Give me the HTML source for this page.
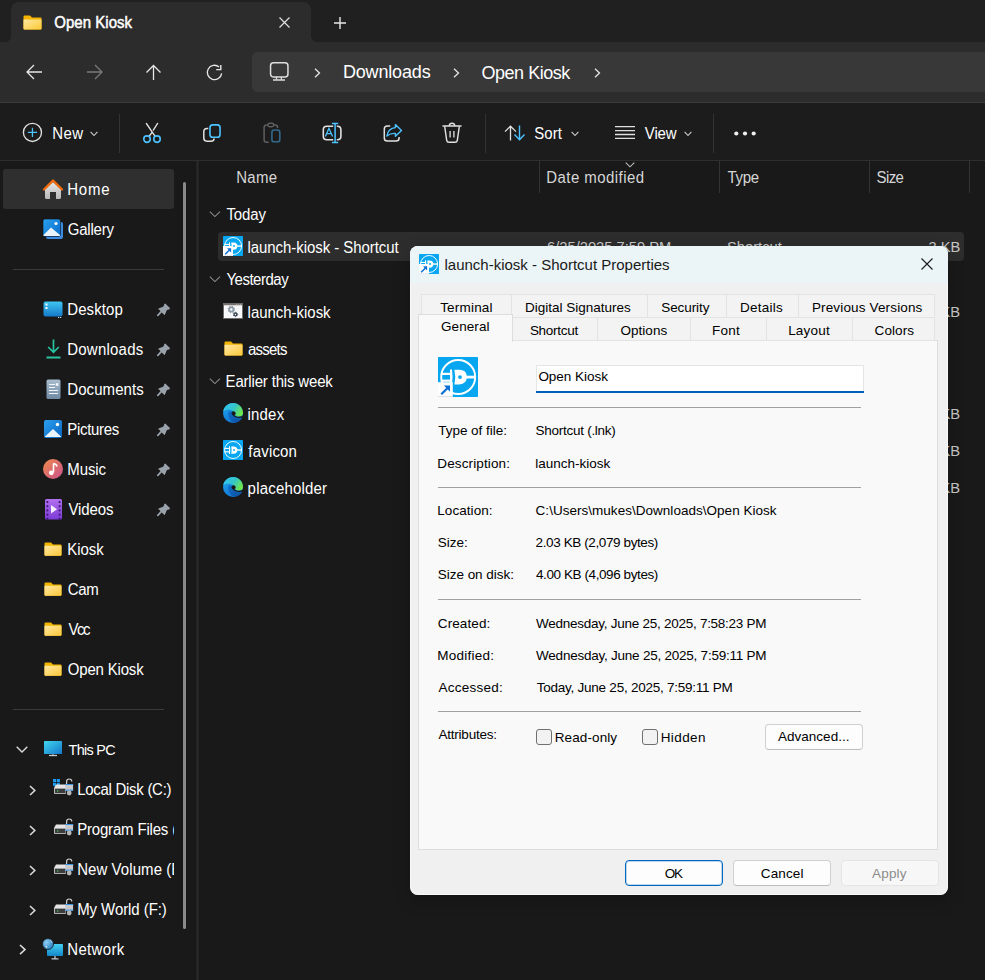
<!DOCTYPE html>
<html><head><meta charset="utf-8"><style>
html,body{margin:0;padding:0}
body{width:985px;height:980px;position:relative;overflow:hidden;background:#191919;font-family:"Liberation Sans", sans-serif}
.t{position:absolute;white-space:pre;line-height:1;font-family:"Liberation Sans", sans-serif}
svg{overflow:visible}
</style></head><body>
<div style="position:absolute;left:0px;top:0px;width:985px;height:42px;background:#202020"></div>
<div style="position:absolute;left:11px;top:2px;width:300px;height:44px;background:#2c2c2c;border-radius:8px 8px 0 0"></div>
<div style="position:absolute;left:0px;top:42px;width:985px;height:61px;background:#2c2c2c"></div>
<div style="position:absolute;left:6px;top:37px;width:5px;height:5px;background:radial-gradient(circle at 0 0, transparent 4.5px, #2c2c2c 5px)"></div>
<div style="position:absolute;left:311px;top:37px;width:5px;height:5px;background:radial-gradient(circle at 100% 0, transparent 4.5px, #2c2c2c 5px)"></div>
<svg style="position:absolute;left:23px;top:15px" width="19" height="15" viewBox="0 0 19 15"><defs><linearGradient id="fg" x1="0" y1="0" x2="1" y2="1"><stop offset="0" stop-color="#ffe9a0"/><stop offset="1" stop-color="#fcc935"/></linearGradient></defs><path d="M0.5 1.5 Q0.5 0.5 1.5 0.5 H7 L9 2.5 H17.5 Q18.5 2.5 18.5 3.5 V13.5 Q18.5 14.5 17.5 14.5 H1.5 Q0.5 14.5 0.5 13.5Z" fill="#f4b400"/><path d="M0.5 4.5 H18.5 V13.5 Q18.5 14.5 17.5 14.5 H1.5 Q0.5 14.5 0.5 13.5Z" fill="url(#fg)"/></svg>
<div class="t" style="left:54.25px;top:15.10px;font-size:15px;color:#ffffff;font-weight:400;letter-spacing:0.028px;transform:scaleY(1.04);transform-origin:0 12.70px;-webkit-text-stroke:0.45px #fff;">Open Kiosk</div>
<svg style="position:absolute;left:279px;top:17px" width="11" height="11" viewBox="0 0 11 11"><path d="M0.5 0.5 L10.5 10.5 M10.5 0.5 L0.5 10.5" stroke="#e0e0e0" stroke-width="1.2"/></svg>
<svg style="position:absolute;left:334px;top:17px" width="12" height="12" viewBox="0 0 12 12"><path d="M6 0 V12 M0 6 H12" stroke="#e8e8e8" stroke-width="1.4"/></svg>
<svg style="position:absolute;left:26px;top:64px" width="17" height="16" viewBox="0 0 17 16"><path d="M16 8 H1.5 M8 1 L1 8 L8 15" stroke="#e6e6e6" stroke-width="1.3" fill="none"/></svg>
<svg style="position:absolute;left:86px;top:64px" width="17" height="16" viewBox="0 0 17 16"><path d="M1 8 H15.5 M9 1 L16 8 L9 15" stroke="#7a7a7a" stroke-width="1.3" fill="none"/></svg>
<svg style="position:absolute;left:145px;top:64px" width="17" height="16" viewBox="0 0 17 16"><path d="M8.5 16 V1.5 M1.5 8.5 L8.5 1.5 L15.5 8.5" stroke="#e6e6e6" stroke-width="1.3" fill="none"/></svg>
<svg style="position:absolute;left:206px;top:64px" width="18" height="18" viewBox="0 0 18 18"><path d="M13.1 2.9 A7.2 7.2 0 1 0 15.65 9.4" stroke="#e6e6e6" stroke-width="1.35" fill="none"/><path d="M14.8 0.9 V5.6 H10.2" stroke="#e6e6e6" stroke-width="1.4" fill="none"/></svg>
<div style="position:absolute;left:252px;top:52px;width:740px;height:40px;background:#383838;border-radius:5px"></div>
<svg style="position:absolute;left:269px;top:61px" width="20" height="20" viewBox="0 0 20 20"><rect x="1.55" y="1.75" width="17.4" height="14.3" rx="3" stroke="#dedede" stroke-width="1.5" fill="none"/><path d="M7.5 16 V18.6 M12.4 16 V18.6" stroke="#dedede" stroke-width="1.3"/><path d="M4 19 H16" stroke="#dedede" stroke-width="1.5"/></svg>
<svg style="position:absolute;left:314px;top:68px" width="7" height="10" viewBox="0 0 7 10"><path d="M1 0.8 L5.5 5 L1 9.2" stroke="#e6e6e6" stroke-width="1.3" fill="none"/></svg>
<svg style="position:absolute;left:453px;top:68px" width="7" height="10" viewBox="0 0 7 10"><path d="M1 0.8 L5.5 5 L1 9.2" stroke="#e6e6e6" stroke-width="1.3" fill="none"/></svg>
<svg style="position:absolute;left:594px;top:68px" width="7" height="10" viewBox="0 0 7 10"><path d="M1 0.8 L5.5 5 L1 9.2" stroke="#e6e6e6" stroke-width="1.3" fill="none"/></svg>
<div class="t" style="left:342.90px;top:62.76px;font-size:18px;color:#ffffff;font-weight:400;letter-spacing:-0.159px;transform:scaleY(1.04);transform-origin:0 15.24px;">Downloads</div>
<div class="t" style="left:481.43px;top:63.66px;font-size:18px;color:#ffffff;font-weight:400;letter-spacing:-0.458px;transform:scaleY(1.04);transform-origin:0 15.24px;">Open Kiosk</div>
<div style="position:absolute;left:0px;top:102px;width:985px;height:1px;background:#3a3a3a"></div>
<div style="position:absolute;left:0px;top:103px;width:985px;height:57px;background:#1c1c1c"></div>
<div style="position:absolute;left:0px;top:160px;width:985px;height:1px;background:#2e2e2e"></div>
<svg style="position:absolute;left:22px;top:122px" width="21" height="21" viewBox="0 0 21 21"><circle cx="10.45" cy="10.4" r="9.05" stroke="#e0e0e0" stroke-width="1.35" fill="none"/><path d="M10.45 5.8 V15 M5.85 10.4 H15.05" stroke="#4cc2ff" stroke-width="1.3"/></svg>
<div class="t" style="left:52.15px;top:126.40px;font-size:15px;color:#ffffff;font-weight:400;letter-spacing:0.475px;transform:scaleY(1.04);transform-origin:0 12.70px;">New</div>
<svg style="position:absolute;left:90px;top:131px" width="8" height="6" viewBox="0 0 8 6"><path d="M0.6 0.8 L4 4.5 L7.4 0.8" stroke="#cfcfcf" stroke-width="1.1" fill="none"/></svg>
<div style="position:absolute;left:119px;top:114px;width:1px;height:39px;background:#333333"></div>
<svg style="position:absolute;left:142px;top:123px" width="20" height="21" viewBox="0 0 20 21"><path d="M4.4 0.5 L12.8 12.8" stroke="#e0e0e0" stroke-width="1.35" fill="none" stroke-linecap="round"/><path d="M15.6 0.4 L11.3 7.1 M9.9 9.6 L7.3 13" stroke="#e0e0e0" stroke-width="1.35" fill="none" stroke-linecap="round"/><circle cx="5" cy="16.1" r="3.25" stroke="#4cc2ff" stroke-width="1.6" fill="none"/><circle cx="15" cy="16.1" r="3.25" stroke="#4cc2ff" stroke-width="1.6" fill="none"/></svg>
<svg style="position:absolute;left:203px;top:124px" width="19" height="19" viewBox="0 0 19 19"><rect x="6.95" y="0.9" width="10.1" height="12.3" rx="2.8" stroke="#4cc2ff" stroke-width="1.6" fill="none"/><path d="M5.3 4.6 H4 Q0.8 4.6 0.8 7.8 V14.1 Q0.8 17.2 3.9 17.2 H8 Q11.1 17.2 11.1 14.6" stroke="#e0e0e0" stroke-width="1.5" fill="none"/></svg>
<svg style="position:absolute;left:258px;top:118px" width="26" height="28" viewBox="0 0 26 28"><path d="M10.8 24.2 H8.6 Q6.1 24.2 6.1 21.7 V9.5 Q6.1 7 8.6 7 H9.8" stroke="#5e5e5e" stroke-width="1.5" fill="none"/><rect x="9.9" y="5.2" width="5.8" height="3.6" rx="1.7" stroke="#5e5e5e" stroke-width="1.4" fill="none"/><path d="M15.7 7 H17.2 Q19.6 7 19.6 9.4 V10" stroke="#5e5e5e" stroke-width="1.5" fill="none"/><rect x="13.9" y="12" width="7.9" height="11.8" rx="2.4" stroke="#32698a" stroke-width="1.6" fill="none"/></svg>
<svg style="position:absolute;left:318px;top:118px" width="28" height="28" viewBox="0 0 28 28"><path d="M15.2 8.2 H8.8 Q5.3 8.2 5.3 11.7 V18.3 Q5.3 21.8 8.8 21.8 H15.2 M18.8 8.2 H19.4 Q22.9 8.2 22.9 11.7 V18.3 Q22.9 21.8 19.4 21.8 H18.8" stroke="#e0e0e0" stroke-width="1.6" fill="none"/><path d="M17.1 5.2 V24.8 M13.9 5.5 H20.2 M13.9 24.5 H20.2" stroke="#4cc2ff" stroke-width="1.5" fill="none"/><path d="M7.4 18.4 L10.9 10.3 L14.6 18.4 M8.6 15.6 H13.4" stroke="#4cc2ff" stroke-width="1.3" fill="none"/></svg>
<svg style="position:absolute;left:382px;top:123px" width="22" height="21" viewBox="0 0 22 21"><path d="M8.2 3 H5.4 Q2.3 3 2.3 6.1 V14.9 Q2.3 18 5.4 18 H14 Q17.1 18 17.1 14.9 V14" stroke="#e0e0e0" stroke-width="1.5" fill="none"/><path d="M13.4 1.6 L19.5 7.4 L13.4 13.2 V10.4 Q8.6 10 4.9 13 Q6.2 5 13.4 4.6 Z" stroke="#4cc2ff" stroke-width="1.4" fill="none" stroke-linejoin="round"/></svg>
<svg style="position:absolute;left:442px;top:122px" width="20" height="22" viewBox="0 0 20 22"><path d="M1 4.1 H19" stroke="#e0e0e0" stroke-width="1.5" fill="none" stroke-linecap="round"/><path d="M7.2 4 Q7.5 1.3 10 1.3 Q12.5 1.3 12.8 4" stroke="#e0e0e0" stroke-width="1.4" fill="none"/><path d="M2.7 4.5 L4.7 18.4 Q5 20.3 7 20.3 H13 Q15 20.3 15.3 18.4 L17.3 4.5" stroke="#e0e0e0" stroke-width="1.45" fill="none"/><path d="M8.1 9 V15.5 M11.9 9 V15.5" stroke="#c8c8c8" stroke-width="1.5"/></svg>
<div style="position:absolute;left:485px;top:114px;width:1px;height:39px;background:#333333"></div>
<svg style="position:absolute;left:504px;top:125px" width="22" height="16" viewBox="0 0 22 16"><path d="M6.5 15.5 V1.5 M1 6.6 L6.5 1.2 L12 6.6" stroke="#e0e0e0" stroke-width="1.3" fill="none"/><path d="M15.5 0.5 V14.5 M10.5 9.5 L15.5 14.8 L20.5 9.5" stroke="#4cc2ff" stroke-width="1.4" fill="none"/></svg>
<div class="t" style="left:534.27px;top:126.40px;font-size:15px;color:#ffffff;font-weight:400;letter-spacing:0.042px;transform:scaleY(1.04);transform-origin:0 12.70px;">Sort</div>
<svg style="position:absolute;left:571px;top:131px" width="8" height="6" viewBox="0 0 8 6"><path d="M0.6 0.8 L4 4.5 L7.4 0.8" stroke="#cfcfcf" stroke-width="1.1" fill="none"/></svg>
<svg style="position:absolute;left:615px;top:126px" width="20" height="14" viewBox="0 0 20 14"><path d="M0 0.7 H20 M0 4.6 H20 M0 8.5 H20 M0 12.4 H20" stroke="#e0e0e0" stroke-width="1.3"/></svg>
<div class="t" style="left:644.77px;top:126.40px;font-size:15px;color:#ffffff;font-weight:400;letter-spacing:-0.108px;transform:scaleY(1.04);transform-origin:0 12.70px;">View</div>
<svg style="position:absolute;left:684px;top:131px" width="8" height="6" viewBox="0 0 8 6"><path d="M0.6 0.8 L4 4.5 L7.4 0.8" stroke="#cfcfcf" stroke-width="1.1" fill="none"/></svg>
<div style="position:absolute;left:713px;top:114px;width:1px;height:39px;background:#333333"></div>
<svg style="position:absolute;left:734px;top:131px" width="22" height="5" viewBox="0 0 22 5"><circle cx="2.3" cy="2.5" r="2.1" fill="#f0f0f0"/><circle cx="11" cy="2.5" r="2.1" fill="#f0f0f0"/><circle cx="19.7" cy="2.5" r="2.1" fill="#f0f0f0"/></svg>
<div style="position:absolute;left:196px;top:161px;width:3px;height:819px;background:#222222"></div>
<div style="position:absolute;left:197px;top:161px;width:1px;height:819px;background:#2a2a2a"></div>
<div style="position:absolute;left:183px;top:182px;width:3px;height:747px;background:#8a8a8a;border-radius:2px"></div>
<div style="position:absolute;left:3px;top:169px;width:171px;height:40px;background:#2f2f2f;border-radius:3px"></div>
<svg style="position:absolute;left:43px;top:178px" width="20" height="21" viewBox="0 0 20 21"><defs><linearGradient id="hg" x1="0" y1="0" x2="0" y2="1"><stop offset="0" stop-color="#e6e6e6"/><stop offset="1" stop-color="#b8b8b8"/></linearGradient></defs><path d="M2 11 L10 4 L18 11 V19.5 Q18 21 16.5 21 H13 V14 H7 V21 H3.5 Q2 21 2 19.5Z" fill="url(#hg)"/><path d="M1 11.5 L10 2.5 L19 11.5" stroke="#f26b0f" stroke-width="2.4" fill="none" stroke-linejoin="round" stroke-linecap="round"/></svg>
<svg style="position:absolute;left:42px;top:218px" width="22" height="22" viewBox="0 0 22 22"><defs><linearGradient id="gg" x1="0" y1="0" x2="1" y2="1"><stop offset="0" stop-color="#2aa1f0"/><stop offset="1" stop-color="#0a6bc9"/></linearGradient></defs><rect x="4" y="4" width="17" height="17" rx="2" fill="#3d8be0"/><rect x="1" y="1" width="17.5" height="17.5" rx="2" fill="url(#gg)" stroke="#111" stroke-width="0.6"/><path d="M1.5 17 L9 9.5 L18 17 V17.5 Q18 18 17.5 18 H2 Q1.5 18 1.5 17.5Z" fill="#e8f3fc"/><circle cx="14" cy="5.5" r="1.6" fill="#fff"/></svg>
<div style="position:absolute;left:13px;top:269px;width:151px;height:1px;background:#3b3b3b"></div>
<div style="position:absolute;left:13px;top:709px;width:151px;height:1px;background:#3b3b3b"></div>
<div class="t" style="left:67.25px;top:181.90px;font-size:15px;color:#ffffff;font-weight:400;letter-spacing:0.792px;transform:scaleY(1.04);transform-origin:0 12.70px;">Home</div>
<div class="t" style="left:67.75px;top:221.90px;font-size:15px;color:#ffffff;font-weight:400;letter-spacing:-0.225px;transform:scaleY(1.04);transform-origin:0 12.70px;">Gallery</div>
<div class="t" style="left:67.25px;top:301.90px;font-size:15px;color:#ffffff;font-weight:400;letter-spacing:0.096px;transform:scaleY(1.04);transform-origin:0 12.70px;">Desktop</div>
<svg style="position:absolute;left:157px;top:303.40000000000003px" width="14" height="14" viewBox="0 0 14 14"><path d="M7.3 0.9 Q8 0.2 8.8 0.9 L12.6 4.7 Q13.3 5.5 12.6 6.2 L9.9 6.9 L7.6 12.3 L1.1 5.8 L6.5 3.5 Z" fill="#9aa3ab"/><path d="M4.3 8.7 L0.8 12.3" stroke="#9aa3ab" stroke-width="1.7" stroke-linecap="round"/></svg>
<div class="t" style="left:67.25px;top:341.90px;font-size:15px;color:#ffffff;font-weight:400;letter-spacing:0.225px;transform:scaleY(1.04);transform-origin:0 12.70px;">Downloads</div>
<svg style="position:absolute;left:157px;top:343.40000000000003px" width="14" height="14" viewBox="0 0 14 14"><path d="M7.3 0.9 Q8 0.2 8.8 0.9 L12.6 4.7 Q13.3 5.5 12.6 6.2 L9.9 6.9 L7.6 12.3 L1.1 5.8 L6.5 3.5 Z" fill="#9aa3ab"/><path d="M4.3 8.7 L0.8 12.3" stroke="#9aa3ab" stroke-width="1.7" stroke-linecap="round"/></svg>
<div class="t" style="left:67.25px;top:381.90px;font-size:15px;color:#ffffff;font-weight:400;letter-spacing:0.084px;transform:scaleY(1.04);transform-origin:0 12.70px;">Documents</div>
<svg style="position:absolute;left:157px;top:383.40000000000003px" width="14" height="14" viewBox="0 0 14 14"><path d="M7.3 0.9 Q8 0.2 8.8 0.9 L12.6 4.7 Q13.3 5.5 12.6 6.2 L9.9 6.9 L7.6 12.3 L1.1 5.8 L6.5 3.5 Z" fill="#9aa3ab"/><path d="M4.3 8.7 L0.8 12.3" stroke="#9aa3ab" stroke-width="1.7" stroke-linecap="round"/></svg>
<div class="t" style="left:67.25px;top:421.90px;font-size:15px;color:#ffffff;font-weight:400;letter-spacing:-0.296px;transform:scaleY(1.04);transform-origin:0 12.70px;">Pictures</div>
<svg style="position:absolute;left:157px;top:423.40000000000003px" width="14" height="14" viewBox="0 0 14 14"><path d="M7.3 0.9 Q8 0.2 8.8 0.9 L12.6 4.7 Q13.3 5.5 12.6 6.2 L9.9 6.9 L7.6 12.3 L1.1 5.8 L6.5 3.5 Z" fill="#9aa3ab"/><path d="M4.3 8.7 L0.8 12.3" stroke="#9aa3ab" stroke-width="1.7" stroke-linecap="round"/></svg>
<div class="t" style="left:67.25px;top:461.90px;font-size:15px;color:#ffffff;font-weight:400;letter-spacing:-0.075px;transform:scaleY(1.04);transform-origin:0 12.70px;">Music</div>
<svg style="position:absolute;left:157px;top:463.40000000000003px" width="14" height="14" viewBox="0 0 14 14"><path d="M7.3 0.9 Q8 0.2 8.8 0.9 L12.6 4.7 Q13.3 5.5 12.6 6.2 L9.9 6.9 L7.6 12.3 L1.1 5.8 L6.5 3.5 Z" fill="#9aa3ab"/><path d="M4.3 8.7 L0.8 12.3" stroke="#9aa3ab" stroke-width="1.7" stroke-linecap="round"/></svg>
<div class="t" style="left:68.38px;top:501.90px;font-size:15px;color:#ffffff;font-weight:400;letter-spacing:-0.100px;transform:scaleY(1.04);transform-origin:0 12.70px;">Videos</div>
<svg style="position:absolute;left:157px;top:503.40000000000003px" width="14" height="14" viewBox="0 0 14 14"><path d="M7.3 0.9 Q8 0.2 8.8 0.9 L12.6 4.7 Q13.3 5.5 12.6 6.2 L9.9 6.9 L7.6 12.3 L1.1 5.8 L6.5 3.5 Z" fill="#9aa3ab"/><path d="M4.3 8.7 L0.8 12.3" stroke="#9aa3ab" stroke-width="1.7" stroke-linecap="round"/></svg>
<div class="t" style="left:67.25px;top:541.90px;font-size:15px;color:#ffffff;font-weight:400;letter-spacing:-0.019px;transform:scaleY(1.04);transform-origin:0 12.70px;">Kiosk</div>
<div class="t" style="left:67.75px;top:581.90px;font-size:15px;color:#ffffff;font-weight:400;letter-spacing:-0.387px;transform:scaleY(1.04);transform-origin:0 12.70px;">Cam</div>
<div class="t" style="left:68.38px;top:621.90px;font-size:15px;color:#ffffff;font-weight:400;letter-spacing:-1.400px;transform:scaleY(1.04);transform-origin:0 12.70px;">Vcc</div>
<div class="t" style="left:67.75px;top:661.90px;font-size:15px;color:#ffffff;font-weight:400;letter-spacing:-0.183px;transform:scaleY(1.04);transform-origin:0 12.70px;">Open Kiosk</div>
<svg style="position:absolute;left:43px;top:301px" width="20" height="17" viewBox="0 0 20 17"><defs><linearGradient id="dg" x1="0" y1="0" x2="0" y2="1"><stop offset="0" stop-color="#3fc6f0"/><stop offset="1" stop-color="#1579c8"/></linearGradient></defs><rect x="0.5" y="0.5" width="19" height="15" rx="2" fill="url(#dg)"/><rect x="2.5" y="2.5" width="2" height="2" fill="#fff"/><rect x="2.5" y="6" width="2" height="2" fill="#fff"/><rect x="15" y="16" width="1.2" height="1" fill="#ddd"/><rect x="17" y="16" width="1.2" height="1" fill="#ddd"/></svg>
<svg style="position:absolute;left:46px;top:339px" width="15" height="20" viewBox="0 0 15 20"><path d="M7.5 0.5 V13 M2.2 8 L7.5 13.3 L12.8 8" stroke="#28c3a0" stroke-width="1.7" fill="none"/><path d="M0.5 18.5 H14.5" stroke="#28c3a0" stroke-width="2"/></svg>
<svg style="position:absolute;left:46px;top:379px" width="15" height="20" viewBox="0 0 15 20"><defs><linearGradient id="docg" x1="0" y1="0" x2="0" y2="1"><stop offset="0" stop-color="#a9bccd"/><stop offset="1" stop-color="#6f8aa3"/></linearGradient></defs><rect x="0.5" y="0.5" width="14" height="19.5" rx="1.5" fill="url(#docg)"/><path d="M3 5.5 H9 M3 8.5 H9 M3 11.5 H12 M3 14.5 H12" stroke="#f2f6fa" stroke-width="1.2"/><rect x="9.8" y="4.2" width="2.6" height="2.6" fill="#f2f6fa"/></svg>
<svg style="position:absolute;left:44px;top:420px" width="18" height="18" viewBox="0 0 18 18"><defs><linearGradient id="pg" x1="0" y1="0" x2="1" y2="1"><stop offset="0" stop-color="#2aa1f0"/><stop offset="1" stop-color="#0a63c0"/></linearGradient></defs><rect x="0" y="0" width="18" height="18" rx="2" fill="url(#pg)"/><path d="M1 16.5 L9 9 L17 16.5 V17 H1Z" fill="#eaf4fc"/><circle cx="13.5" cy="4.5" r="1.7" fill="#fff"/></svg>
<svg style="position:absolute;left:43px;top:459px" width="20" height="20" viewBox="0 0 20 20"><defs><linearGradient id="mg" x1="0" y1="0" x2="1" y2="1"><stop offset="0" stop-color="#f08a4b"/><stop offset="1" stop-color="#c9508e"/></linearGradient></defs><circle cx="10" cy="10" r="10" fill="url(#mg)"/><path d="M10.5 4.5 V13.5" stroke="#fff" stroke-width="1.6"/><path d="M10.5 4.5 Q13.5 5 14 7.5" stroke="#fff" stroke-width="1.6" fill="none"/><circle cx="8.3" cy="13.8" r="2.4" fill="#fff"/></svg>
<svg style="position:absolute;left:45px;top:499px" width="17" height="21" viewBox="0 0 17 21"><defs><linearGradient id="vg" x1="0" y1="0" x2="0" y2="1"><stop offset="0" stop-color="#b36ff0"/><stop offset="1" stop-color="#7c3bd6"/></linearGradient></defs><rect x="0" y="0" width="17" height="20.5" rx="1.5" fill="url(#vg)"/><rect x="1.5" y="2.0" width="1.8" height="2" fill="#3a1a70"/><rect x="13.7" y="2.0" width="1.8" height="2" fill="#3a1a70"/><rect x="1.5" y="6.2" width="1.8" height="2" fill="#3a1a70"/><rect x="13.7" y="6.2" width="1.8" height="2" fill="#3a1a70"/><rect x="1.5" y="10.4" width="1.8" height="2" fill="#3a1a70"/><rect x="13.7" y="10.4" width="1.8" height="2" fill="#3a1a70"/><rect x="1.5" y="14.600000000000001" width="1.8" height="2" fill="#3a1a70"/><rect x="13.7" y="14.600000000000001" width="1.8" height="2" fill="#3a1a70"/><rect x="1.5" y="18.8" width="1.8" height="2" fill="#3a1a70"/><rect x="13.7" y="18.8" width="1.8" height="2" fill="#3a1a70"/><path d="M6 6 L12 10.2 L6 14.5Z" fill="#f4eefe"/></svg>
<svg style="position:absolute;left:44px;top:541.5px" width="18" height="14.2" viewBox="0 0 18 14.2"><defs><linearGradient id="fn0" x1="0" y1="0" x2="1" y2="1"><stop offset="0" stop-color="#ffe8a3"/><stop offset="1" stop-color="#fcc73a"/></linearGradient></defs><path d="M0.5 1.5 Q0.5 0.5 1.5 0.5 H7 L9 2.5 H16.5 Q17.5 2.5 17.5 3.5 V12.7 Q17.5 13.7 16.5 13.7 H1.5 Q0.5 13.7 0.5 12.7Z" fill="#f0b400"/><path d="M0.5 3.8 H17.5 V12.7 Q17.5 13.7 16.5 13.7 H1.5 Q0.5 13.7 0.5 12.7Z" fill="url(#fn0)"/></svg>
<svg style="position:absolute;left:44px;top:581.5px" width="18" height="14.2" viewBox="0 0 18 14.2"><defs><linearGradient id="fn1" x1="0" y1="0" x2="1" y2="1"><stop offset="0" stop-color="#ffe8a3"/><stop offset="1" stop-color="#fcc73a"/></linearGradient></defs><path d="M0.5 1.5 Q0.5 0.5 1.5 0.5 H7 L9 2.5 H16.5 Q17.5 2.5 17.5 3.5 V12.7 Q17.5 13.7 16.5 13.7 H1.5 Q0.5 13.7 0.5 12.7Z" fill="#f0b400"/><path d="M0.5 3.8 H17.5 V12.7 Q17.5 13.7 16.5 13.7 H1.5 Q0.5 13.7 0.5 12.7Z" fill="url(#fn1)"/></svg>
<svg style="position:absolute;left:44px;top:621.5px" width="18" height="14.2" viewBox="0 0 18 14.2"><defs><linearGradient id="fn2" x1="0" y1="0" x2="1" y2="1"><stop offset="0" stop-color="#ffe8a3"/><stop offset="1" stop-color="#fcc73a"/></linearGradient></defs><path d="M0.5 1.5 Q0.5 0.5 1.5 0.5 H7 L9 2.5 H16.5 Q17.5 2.5 17.5 3.5 V12.7 Q17.5 13.7 16.5 13.7 H1.5 Q0.5 13.7 0.5 12.7Z" fill="#f0b400"/><path d="M0.5 3.8 H17.5 V12.7 Q17.5 13.7 16.5 13.7 H1.5 Q0.5 13.7 0.5 12.7Z" fill="url(#fn2)"/></svg>
<svg style="position:absolute;left:44px;top:661.5px" width="18" height="14.2" viewBox="0 0 18 14.2"><defs><linearGradient id="fn3" x1="0" y1="0" x2="1" y2="1"><stop offset="0" stop-color="#ffe8a3"/><stop offset="1" stop-color="#fcc73a"/></linearGradient></defs><path d="M0.5 1.5 Q0.5 0.5 1.5 0.5 H7 L9 2.5 H16.5 Q17.5 2.5 17.5 3.5 V12.7 Q17.5 13.7 16.5 13.7 H1.5 Q0.5 13.7 0.5 12.7Z" fill="#f0b400"/><path d="M0.5 3.8 H17.5 V12.7 Q17.5 13.7 16.5 13.7 H1.5 Q0.5 13.7 0.5 12.7Z" fill="url(#fn3)"/></svg>
<svg style="position:absolute;left:16px;top:746px" width="12" height="7" viewBox="0 0 12 7"><path d="M0.7 0.7 L6 6 L11.3 0.7" stroke="#d8d8d8" stroke-width="1.4" fill="none"/></svg>
<svg style="position:absolute;left:43px;top:741px" width="20" height="16" viewBox="0 0 20 16"><defs><linearGradient id="pcg" x1="0" y1="0" x2="1" y2="1"><stop offset="0" stop-color="#40d6ee"/><stop offset="1" stop-color="#1578cc"/></linearGradient></defs><rect x="1" y="0" width="18" height="13" rx="0.6" fill="url(#pcg)"/><path d="M6 14.5 H14" stroke="#c4cbd2" stroke-width="1.3"/><path d="M10 13 V14" stroke="#c4cbd2" stroke-width="1"/></svg>
<div class="t" style="left:68.55px;top:742.51px;font-size:14.4px;color:#ffffff;font-weight:400;letter-spacing:-0.696px;transform:scaleY(1.04);transform-origin:0 12.19px;">This PC</div>
<svg style="position:absolute;left:29px;top:784.5px" width="7" height="11" viewBox="0 0 7 11"><path d="M1 1 L5.8 5.5 L1 10" stroke="#dadada" stroke-width="1.6" fill="none"/></svg>
<svg style="position:absolute;left:53px;top:778.2px" width="21" height="19" viewBox="0 0 21 19"><rect x="0" y="1" width="3.1" height="3.1" fill="#1a9cf0"/><rect x="3.8" y="1" width="3.1" height="3.1" fill="#1a9cf0"/><rect x="0" y="4.8" width="3.1" height="3.1" fill="#1a9cf0"/><rect x="3.8" y="4.8" width="3.1" height="3.1" fill="#1a9cf0"/><path d="M1 10 L3 6.4 H13 V10Z" fill="#e4e4e4"/><path d="M1 10 H13 V15.2 Q13 16 12.2 16 H1.8 Q1 16 1 15.2Z" fill="#bdbdbd"/><rect x="2" y="10.8" width="10.5" height="4.3" fill="#3c3c3c"/><rect x="4" y="12.3" width="1.3" height="1.3" fill="#3bd45a"/><path d="M13.6 6 V3.6 Q13.6 1 16.2 1 Q18.8 1 18.8 3.6" stroke="#cfcfcf" stroke-width="1.2" fill="none"/><rect x="12.3" y="6" width="7.8" height="7" rx="0.5" fill="#c9c9c9"/><rect x="12.3" y="6" width="7.8" height="0.9" fill="#2a8ee8"/><rect x="12.3" y="11.6" width="7.8" height="1.1" fill="#2a8ee8"/><circle cx="16.2" cy="15" r="2.4" fill="#b8b8b8"/></svg>
<div class="t" style="left:77.15px;top:781.80px;font-size:15px;color:#ffffff;font-weight:400;letter-spacing:-0.282px;transform:scaleY(1.04);transform-origin:0 12.70px;width:96.4px;height:20px;overflow:hidden;">Local Disk (C:)</div>
<svg style="position:absolute;left:29px;top:824.6px" width="7" height="11" viewBox="0 0 7 11"><path d="M1 1 L5.8 5.5 L1 10" stroke="#dadada" stroke-width="1.6" fill="none"/></svg>
<svg style="position:absolute;left:53px;top:818.3000000000001px" width="21" height="19" viewBox="0 0 21 19"><path d="M1 10 L3 6.4 H13 V10Z" fill="#e4e4e4"/><path d="M1 10 H13 V15.2 Q13 16 12.2 16 H1.8 Q1 16 1 15.2Z" fill="#bdbdbd"/><rect x="2" y="10.8" width="10.5" height="4.3" fill="#3c3c3c"/><rect x="4" y="12.3" width="1.3" height="1.3" fill="#3bd45a"/><path d="M13.6 6 V3.6 Q13.6 1 16.2 1 Q18.8 1 18.8 3.6" stroke="#cfcfcf" stroke-width="1.2" fill="none"/><rect x="12.3" y="6" width="7.8" height="7" rx="0.5" fill="#c9c9c9"/><rect x="12.3" y="6" width="7.8" height="0.9" fill="#2a8ee8"/><rect x="12.3" y="11.6" width="7.8" height="1.1" fill="#2a8ee8"/><circle cx="16.2" cy="15" r="2.4" fill="#b8b8b8"/></svg>
<div class="t" style="left:77.15px;top:821.90px;font-size:15px;color:#ffffff;font-weight:400;letter-spacing:-0.177px;transform:scaleY(1.04);transform-origin:0 12.70px;width:96.4px;height:20px;overflow:hidden;">Program Files (D:)</div>
<svg style="position:absolute;left:29px;top:864.6px" width="7" height="11" viewBox="0 0 7 11"><path d="M1 1 L5.8 5.5 L1 10" stroke="#dadada" stroke-width="1.6" fill="none"/></svg>
<svg style="position:absolute;left:53px;top:858.3000000000001px" width="21" height="19" viewBox="0 0 21 19"><path d="M1 10 L3 6.4 H13 V10Z" fill="#e4e4e4"/><path d="M1 10 H13 V15.2 Q13 16 12.2 16 H1.8 Q1 16 1 15.2Z" fill="#bdbdbd"/><rect x="2" y="10.8" width="10.5" height="4.3" fill="#3c3c3c"/><rect x="4" y="12.3" width="1.3" height="1.3" fill="#3bd45a"/><path d="M13.6 6 V3.6 Q13.6 1 16.2 1 Q18.8 1 18.8 3.6" stroke="#cfcfcf" stroke-width="1.2" fill="none"/><rect x="12.3" y="6" width="7.8" height="7" rx="0.5" fill="#c9c9c9"/><rect x="12.3" y="6" width="7.8" height="0.9" fill="#2a8ee8"/><rect x="12.3" y="11.6" width="7.8" height="1.1" fill="#2a8ee8"/><circle cx="16.2" cy="15" r="2.4" fill="#b8b8b8"/></svg>
<div class="t" style="left:77.15px;top:861.90px;font-size:15px;color:#ffffff;font-weight:400;letter-spacing:0.069px;transform:scaleY(1.04);transform-origin:0 12.70px;width:96.4px;height:20px;overflow:hidden;">New Volume (E:)</div>
<svg style="position:absolute;left:29px;top:904.5px" width="7" height="11" viewBox="0 0 7 11"><path d="M1 1 L5.8 5.5 L1 10" stroke="#dadada" stroke-width="1.6" fill="none"/></svg>
<svg style="position:absolute;left:53px;top:898.2px" width="21" height="19" viewBox="0 0 21 19"><path d="M1 10 L3 6.4 H13 V10Z" fill="#e4e4e4"/><path d="M1 10 H13 V15.2 Q13 16 12.2 16 H1.8 Q1 16 1 15.2Z" fill="#bdbdbd"/><rect x="2" y="10.8" width="10.5" height="4.3" fill="#3c3c3c"/><rect x="4" y="12.3" width="1.3" height="1.3" fill="#3bd45a"/><path d="M13.6 6 V3.6 Q13.6 1 16.2 1 Q18.8 1 18.8 3.6" stroke="#cfcfcf" stroke-width="1.2" fill="none"/><rect x="12.3" y="6" width="7.8" height="7" rx="0.5" fill="#c9c9c9"/><rect x="12.3" y="6" width="7.8" height="0.9" fill="#2a8ee8"/><rect x="12.3" y="11.6" width="7.8" height="1.1" fill="#2a8ee8"/><circle cx="16.2" cy="15" r="2.4" fill="#b8b8b8"/></svg>
<div class="t" style="left:77.15px;top:901.80px;font-size:15px;color:#ffffff;font-weight:400;letter-spacing:-0.073px;transform:scaleY(1.04);transform-origin:0 12.70px;width:96.4px;height:20px;overflow:hidden;">My World (F:)</div>
<svg style="position:absolute;left:19px;top:944px" width="8" height="12" viewBox="0 0 8 12"><path d="M1 1 L6 5.6 L1 10.2" stroke="#dadada" stroke-width="1.6" fill="none"/></svg>
<svg style="position:absolute;left:42px;top:938px" width="22" height="22" viewBox="0 0 22 22"><defs><linearGradient id="ng" x1="0" y1="0" x2="0" y2="1"><stop offset="0" stop-color="#44d0f2"/><stop offset="1" stop-color="#1386c9"/></linearGradient><radialGradient id="glb" cx="0.35" cy="0.35" r="0.7"><stop offset="0" stop-color="#8ed0f5"/><stop offset="1" stop-color="#2a7fc0"/></radialGradient></defs><rect x="5" y="6" width="16" height="12" rx="1" fill="url(#ng)"/><path d="M13 18 V20.5 M9.5 20.8 H16.5" stroke="#bfc7cf" stroke-width="1.3"/><circle cx="6" cy="6" r="5.5" fill="url(#glb)" stroke="#1a1a1a" stroke-width="0.8"/><path d="M3 7.5 L5.5 8.5 L4.5 10.5Z M7.5 1.5 Q10 2.5 10.6 5 L9 4Z" fill="#d8eefa" opacity="0.8"/></svg>
<div class="t" style="left:67.25px;top:941.80px;font-size:15px;color:#ffffff;font-weight:400;letter-spacing:0.325px;transform:scaleY(1.04);transform-origin:0 12.70px;">Network</div>
<div class="t" style="left:236.15px;top:170.30px;font-size:15px;color:#d6d6d6;font-weight:400;letter-spacing:0.292px;transform:scaleY(1.04);transform-origin:0 12.70px;">Name</div>
<div class="t" style="left:546.25px;top:170.30px;font-size:15px;color:#d6d6d6;font-weight:400;letter-spacing:0.444px;transform:scaleY(1.04);transform-origin:0 12.70px;">Date modified</div>
<div class="t" style="left:727.62px;top:170.30px;font-size:15px;color:#d6d6d6;font-weight:400;letter-spacing:-0.333px;transform:scaleY(1.04);transform-origin:0 12.70px;">Type</div>
<div class="t" style="left:876.58px;top:170.30px;font-size:15px;color:#d6d6d6;font-weight:400;letter-spacing:-0.600px;transform:scaleY(1.04);transform-origin:0 12.70px;">Size</div>
<div style="position:absolute;left:539px;top:161px;width:1px;height:32px;background:#333333"></div>
<div style="position:absolute;left:719px;top:161px;width:1px;height:32px;background:#333333"></div>
<div style="position:absolute;left:869px;top:161px;width:1px;height:32px;background:#333333"></div>
<div style="position:absolute;left:969px;top:161px;width:1px;height:32px;background:#333333"></div>
<svg style="position:absolute;left:625px;top:162px" width="10" height="6" viewBox="0 0 10 6"><path d="M0.7 0.7 L5 4.8 L9.3 0.7" stroke="#bdbdbd" stroke-width="1.1" fill="none"/></svg>
<svg style="position:absolute;left:208.5px;top:211.3px" width="12" height="7" viewBox="0 0 12 7"><path d="M0.8 0.6 L5.9 5.6 L11 0.6" stroke="#8c8c8c" stroke-width="1.05" fill="none"/></svg>
<div class="t" style="left:226.43px;top:207.10px;font-size:15px;color:#ffffff;font-weight:400;letter-spacing:-0.081px;transform:scaleY(1.04);transform-origin:0 12.70px;">Today</div>
<svg style="position:absolute;left:208.5px;top:276.4px" width="12" height="7" viewBox="0 0 12 7"><path d="M0.8 0.6 L5.9 5.6 L11 0.6" stroke="#8c8c8c" stroke-width="1.05" fill="none"/></svg>
<div class="t" style="left:226.43px;top:272.20px;font-size:15px;color:#ffffff;font-weight:400;letter-spacing:-0.494px;transform:scaleY(1.04);transform-origin:0 12.70px;">Yesterday</div>
<svg style="position:absolute;left:208.5px;top:378.2px" width="12" height="7" viewBox="0 0 12 7"><path d="M0.8 0.6 L5.9 5.6 L11 0.6" stroke="#8c8c8c" stroke-width="1.05" fill="none"/></svg>
<div class="t" style="left:225.55px;top:374.00px;font-size:15px;color:#ffffff;font-weight:400;letter-spacing:-0.172px;transform:scaleY(1.04);transform-origin:0 12.70px;">Earlier this week</div>
<div style="position:absolute;left:218px;top:232px;width:746px;height:29px;background:#2d2d2d;border-radius:4px"></div>
<svg style="position:absolute;left:223px;top:236px" width="20" height="20" viewBox="0 0 20 20"><rect x="0" y="0" width="20" height="20" rx="0.4" fill="#06a7f0"/><circle cx="10.1" cy="10" r="8.5" stroke="#fff" stroke-width="0.95" fill="none"/><path d="M8.2 6.4 H10.6 Q14.4 6.4 14.4 10.05 Q14.4 13.7 10.6 13.7 H8.2 Q9.1 10.05 8.2 6.4Z" fill="#fff"/><circle cx="11" cy="10.05" r="0.95" fill="#06a7f0"/><rect x="14" y="9.35" width="4.6" height="1.4" fill="#fff"/><path d="M6 6.2 H7 Q7.6 10.05 7 13.9 H6Z" fill="#fff"/><rect x="1.4" y="7.9" width="4.8" height="1.1" fill="#fff"/><rect x="1.4" y="11.3" width="4.8" height="1.1" fill="#fff"/><g transform="translate(0 10) scale(1.0)"><rect x="0" y="0" width="10" height="10" fill="#fdfdfd"/><rect x="0" y="9.6" width="10" height="0.4" fill="#c9cdd6"/><path d="M2.2 8.2 L7.2 3.2" stroke="#0a6fd6" stroke-width="1.5" fill="none"/><path d="M4 2.3 H8.1 V6.4Z" fill="#0a6fd6"/></g></svg>
<div class="t" style="left:247.40px;top:240.20px;font-size:15px;color:#ffffff;font-weight:400;letter-spacing:-0.055px;transform:scaleY(1.04);transform-origin:0 12.70px;">launch-kiosk - Shortcut</div>
<div class="t" style="left:547.05px;top:240.46px;font-size:14.7px;color:#c8c8c8;font-weight:400;transform:scaleY(1.04);transform-origin:0 12.44px;">6/25/2025 7:59 PM</div>
<div class="t" style="left:727.08px;top:240.46px;font-size:14.7px;color:#c8c8c8;font-weight:400;transform:scaleY(1.04);transform-origin:0 12.44px;">Shortcut</div>
<div class="t" style="left:928.50px;top:240.46px;font-size:14.7px;color:#c8c8c8;font-weight:400;transform:scaleY(1.04);transform-origin:0 12.44px;">3 KB</div>
<svg style="position:absolute;left:223px;top:303px" width="20" height="16" viewBox="0 0 20 16"><rect x="0.5" y="0.5" width="19" height="15" fill="#ffffff" stroke="#6f6b68" stroke-width="1"/><rect x="1" y="1" width="18" height="1.3" fill="#76716d"/><path d="M13 1.6 H18.5" stroke="#d8d8d8" stroke-width="0.6" stroke-dasharray="0.8 1.2"/><rect x="2" y="3" width="16" height="12" fill="#f7f8f9"/><circle cx="8.3" cy="6.4" r="2.1" stroke="#8e9aa8" stroke-width="1.7" fill="none"/><circle cx="8.3" cy="6.4" r="3.1" stroke="#8e9aa8" stroke-width="1.2" fill="none" stroke-dasharray="1.3 1.14"/><circle cx="12.4" cy="11.4" r="1.4" stroke="#3c4650" stroke-width="1.3" fill="none"/><circle cx="12.4" cy="11.4" r="2.2" stroke="#3c4650" stroke-width="0.9" fill="none" stroke-dasharray="1 1.3"/></svg>
<div class="t" style="left:247.60px;top:305.00px;font-size:15px;color:#ffffff;font-weight:400;letter-spacing:-0.034px;transform:scaleY(1.04);transform-origin:0 12.70px;">launch-kiosk</div>
<svg style="position:absolute;left:224px;top:341px" width="19" height="15" viewBox="0 0 19 15"><defs><linearGradient id="fa" x1="0" y1="0" x2="1" y2="1"><stop offset="0" stop-color="#ffe8a3"/><stop offset="1" stop-color="#fcc73a"/></linearGradient></defs><path d="M0.5 1.5 Q0.5 0.5 1.5 0.5 H7 L9 2.5 H17.5 Q18.5 2.5 18.5 3.5 V13.5 Q18.5 14.5 17.5 14.5 H1.5 Q0.5 14.5 0.5 13.5Z" fill="#f0b400"/><path d="M0.5 3.8 H18.5 V13.5 Q18.5 14.5 17.5 14.5 H1.5 Q0.5 14.5 0.5 13.5Z" fill="url(#fa)"/></svg>
<div class="t" style="left:247.97px;top:342.00px;font-size:15px;color:#ffffff;font-weight:400;letter-spacing:-0.770px;transform:scaleY(1.04);transform-origin:0 12.70px;">assets</div>
<svg style="position:absolute;left:223px;top:403px" width="20" height="20" viewBox="0 0 20 20"><defs><linearGradient id="e1a" x1="0" y1="0.2" x2="0.3" y2="1"><stop offset="0" stop-color="#1da2ec"/><stop offset="1" stop-color="#1277d4"/></linearGradient><linearGradient id="e1b" x1="0" y1="0.1" x2="1" y2="0.55"><stop offset="0" stop-color="#30c4f6"/><stop offset="0.55" stop-color="#35c6c8"/><stop offset="1" stop-color="#6ee64a"/></linearGradient><linearGradient id="e1c" x1="0" y1="0" x2="1" y2="1"><stop offset="0" stop-color="#1170cc"/><stop offset="1" stop-color="#0b4e9c"/></linearGradient></defs><circle cx="10" cy="10" r="10" fill="url(#e1a)"/><path d="M5.2 8.6 C4.6 13.5 7.3 18.8 11.5 19.9 C15 19.5 17.8 17.5 19.2 15 C17 15.6 13.5 15.4 11.2 13.2 C9.8 12 9.5 10.2 9 8.5Z" fill="url(#e1c)"/><path d="M0.2 8.6 C0.9 3.5 5 0 10 0 C15.6 0 20 4.4 20 10 C20 12.3 18.3 13.6 16 13.6 C13.8 13.6 12.4 12.8 11.9 11.5 C11.5 10.3 11 8.8 9.4 7.6 C6.8 5.8 2.3 6.2 0.2 8.6Z" fill="url(#e1b)"/><path d="M9.8 11 C10.8 13.3 13.6 14.4 16.2 14.4 C17.8 14.4 19 13.9 19.6 13.1" stroke="#191919" stroke-width="1.1" fill="none"/><circle cx="10.6" cy="10.3" r="2" fill="#191919"/></svg>
<div class="t" style="left:247.60px;top:407.20px;font-size:15px;color:#ffffff;font-weight:400;letter-spacing:0.169px;transform:scaleY(1.04);transform-origin:0 12.70px;">index</div>
<svg style="position:absolute;left:223px;top:440px" width="20" height="20" viewBox="0 0 20 20"><rect x="0" y="0" width="20" height="20" rx="0.4" fill="#06a7f0"/><circle cx="10.1" cy="10" r="8.5" stroke="#fff" stroke-width="0.95" fill="none"/><path d="M8.2 6.4 H10.6 Q14.4 6.4 14.4 10.05 Q14.4 13.7 10.6 13.7 H8.2 Q9.1 10.05 8.2 6.4Z" fill="#fff"/><circle cx="11" cy="10.05" r="0.95" fill="#06a7f0"/><rect x="14" y="9.35" width="4.6" height="1.4" fill="#fff"/><path d="M6 6.2 H7 Q7.6 10.05 7 13.9 H6Z" fill="#fff"/><rect x="1.4" y="7.9" width="4.8" height="1.1" fill="#fff"/><rect x="1.4" y="11.3" width="4.8" height="1.1" fill="#fff"/></svg>
<div class="t" style="left:248.35px;top:444.10px;font-size:15px;color:#ffffff;font-weight:400;letter-spacing:0.175px;transform:scaleY(1.04);transform-origin:0 12.70px;">favicon</div>
<svg style="position:absolute;left:223px;top:477px" width="20" height="20" viewBox="0 0 20 20"><defs><linearGradient id="e2a" x1="0" y1="0.2" x2="0.3" y2="1"><stop offset="0" stop-color="#1da2ec"/><stop offset="1" stop-color="#1277d4"/></linearGradient><linearGradient id="e2b" x1="0" y1="0.1" x2="1" y2="0.55"><stop offset="0" stop-color="#30c4f6"/><stop offset="0.55" stop-color="#35c6c8"/><stop offset="1" stop-color="#6ee64a"/></linearGradient><linearGradient id="e2c" x1="0" y1="0" x2="1" y2="1"><stop offset="0" stop-color="#1170cc"/><stop offset="1" stop-color="#0b4e9c"/></linearGradient></defs><circle cx="10" cy="10" r="10" fill="url(#e2a)"/><path d="M5.2 8.6 C4.6 13.5 7.3 18.8 11.5 19.9 C15 19.5 17.8 17.5 19.2 15 C17 15.6 13.5 15.4 11.2 13.2 C9.8 12 9.5 10.2 9 8.5Z" fill="url(#e2c)"/><path d="M0.2 8.6 C0.9 3.5 5 0 10 0 C15.6 0 20 4.4 20 10 C20 12.3 18.3 13.6 16 13.6 C13.8 13.6 12.4 12.8 11.9 11.5 C11.5 10.3 11 8.8 9.4 7.6 C6.8 5.8 2.3 6.2 0.2 8.6Z" fill="url(#e2b)"/><path d="M9.8 11 C10.8 13.3 13.6 14.4 16.2 14.4 C17.8 14.4 19 13.9 19.6 13.1" stroke="#191919" stroke-width="1.1" fill="none"/><circle cx="10.6" cy="10.3" r="2" fill="#191919"/></svg>
<div class="t" style="left:247.60px;top:480.70px;font-size:15px;color:#ffffff;font-weight:400;letter-spacing:0.195px;transform:scaleY(1.04);transform-origin:0 12.70px;">placeholder</div>
<div class="t" style="left:928.25px;top:305.26px;font-size:14.7px;color:#c8c8c8;font-weight:400;transform:scaleY(1.04);transform-origin:0 12.44px;">2 KB</div>
<div class="t" style="left:928.25px;top:407.46px;font-size:14.7px;color:#c8c8c8;font-weight:400;transform:scaleY(1.04);transform-origin:0 12.44px;">2 KB</div>
<div class="t" style="left:928.25px;top:444.36px;font-size:14.7px;color:#c8c8c8;font-weight:400;transform:scaleY(1.04);transform-origin:0 12.44px;">2 KB</div>
<div class="t" style="left:928.25px;top:480.96px;font-size:14.7px;color:#c8c8c8;font-weight:400;transform:scaleY(1.04);transform-origin:0 12.44px;">2 KB</div>
<div style="position:absolute;left:410px;top:246px;width:538px;height:649px;border-radius:8px;background:#f0f0f0;box-shadow:0 6px 18px rgba(0,0,0,0.18), inset 0 0 0 1px rgba(255,255,255,0.6);overflow:hidden">
<div style="position:absolute;left:0;top:0;width:538px;height:37px;background:#ebf4f6"></div>
</div>
<svg style="position:absolute;left:419px;top:254px" width="20" height="20" viewBox="0 0 20 20"><rect x="0" y="0" width="20" height="20" rx="0.4" fill="#06a7f0"/><circle cx="10.1" cy="10" r="8.5" stroke="#fff" stroke-width="0.95" fill="none"/><path d="M8.2 6.4 H10.6 Q14.4 6.4 14.4 10.05 Q14.4 13.7 10.6 13.7 H8.2 Q9.1 10.05 8.2 6.4Z" fill="#fff"/><circle cx="11" cy="10.05" r="0.95" fill="#06a7f0"/><rect x="14" y="9.35" width="4.6" height="1.4" fill="#fff"/><path d="M6 6.2 H7 Q7.6 10.05 7 13.9 H6Z" fill="#fff"/><rect x="1.4" y="7.9" width="4.8" height="1.1" fill="#fff"/><rect x="1.4" y="11.3" width="4.8" height="1.1" fill="#fff"/><g transform="translate(0 10) scale(1.0)"><rect x="0" y="0" width="10" height="10" fill="#fdfdfd"/><rect x="0" y="9.6" width="10" height="0.4" fill="#c9cdd6"/><path d="M2.2 8.2 L7.2 3.2" stroke="#0a6fd6" stroke-width="1.5" fill="none"/><path d="M4 2.3 H8.1 V6.4Z" fill="#0a6fd6"/></g></svg>
<div class="t" style="left:444.50px;top:257.30px;font-size:15px;color:#1a1a1a;font-weight:400;">launch-kiosk - Shortcut Properties</div>
<svg style="position:absolute;left:921px;top:258px" width="12" height="12" viewBox="0 0 12 12"><path d="M0.5 0.5 L11.5 11.5 M11.5 0.5 L0.5 11.5" stroke="#1a1a1a" stroke-width="1.1"/></svg>
<div style="position:absolute;left:418px;top:340px;width:520px;height:510px;background:#f9f9f9;border:1px solid #dddddd;box-sizing:border-box"></div>
<div style="position:absolute;left:421px;top:294px;width:91px;height:24px;background:#f3f3f3;border:1px solid #e3e3e3;box-sizing:border-box"></div>
<div style="position:absolute;left:511px;top:294px;width:137px;height:24px;background:#f3f3f3;border:1px solid #e3e3e3;box-sizing:border-box"></div>
<div style="position:absolute;left:647px;top:294px;width:80px;height:24px;background:#f3f3f3;border:1px solid #e3e3e3;box-sizing:border-box"></div>
<div style="position:absolute;left:726px;top:294px;width:73px;height:24px;background:#f3f3f3;border:1px solid #e3e3e3;box-sizing:border-box"></div>
<div style="position:absolute;left:798px;top:294px;width:137px;height:24px;background:#f3f3f3;border:1px solid #e3e3e3;box-sizing:border-box"></div>
<div class="t" style="left:440.15px;top:300.67px;font-size:13.5px;color:#000000;font-weight:400;letter-spacing:0.204px;">Terminal</div>
<div class="t" style="left:525.08px;top:300.67px;font-size:13.5px;color:#000000;font-weight:400;letter-spacing:-0.007px;">Digital Signatures</div>
<div class="t" style="left:661.27px;top:300.67px;font-size:13.5px;color:#000000;font-weight:400;letter-spacing:-0.089px;">Security</div>
<div class="t" style="left:739.98px;top:300.67px;font-size:13.5px;color:#000000;font-weight:400;letter-spacing:0.246px;">Details</div>
<div class="t" style="left:811.88px;top:300.67px;font-size:13.5px;color:#000000;font-weight:400;letter-spacing:0.152px;">Previous Versions</div>
<div style="position:absolute;left:512px;top:317px;width:86px;height:24px;background:#f3f3f3;border:1px solid #e3e3e3;box-sizing:border-box"></div>
<div style="position:absolute;left:597px;top:317px;width:94px;height:24px;background:#f3f3f3;border:1px solid #e3e3e3;box-sizing:border-box"></div>
<div style="position:absolute;left:690px;top:317px;width:77px;height:24px;background:#f3f3f3;border:1px solid #e3e3e3;box-sizing:border-box"></div>
<div style="position:absolute;left:766px;top:317px;width:87px;height:24px;background:#f3f3f3;border:1px solid #e3e3e3;box-sizing:border-box"></div>
<div style="position:absolute;left:852px;top:317px;width:83px;height:24px;background:#f3f3f3;border:1px solid #e3e3e3;box-sizing:border-box"></div>
<div class="t" style="left:529.88px;top:323.57px;font-size:13.5px;color:#000000;font-weight:400;letter-spacing:-0.257px;">Shortcut</div>
<div class="t" style="left:620.38px;top:323.57px;font-size:13.5px;color:#000000;font-weight:400;letter-spacing:0.054px;">Options</div>
<div class="t" style="left:711.98px;top:323.57px;font-size:13.5px;color:#000000;font-weight:400;letter-spacing:0.250px;">Font</div>
<div class="t" style="left:788.17px;top:323.57px;font-size:13.5px;color:#000000;font-weight:400;letter-spacing:0.190px;">Layout</div>
<div class="t" style="left:874.58px;top:323.57px;font-size:13.5px;color:#000000;font-weight:400;letter-spacing:0.085px;">Colors</div>
<div style="position:absolute;left:418px;top:314px;width:95px;height:28px;background:#f9f9f9;border:1px solid #dddddd;border-bottom:none;box-sizing:border-box"></div>
<div class="t" style="left:440.98px;top:320.47px;font-size:13.5px;color:#000000;font-weight:400;letter-spacing:0.083px;">General</div>
<svg style="position:absolute;left:438px;top:357px" width="40" height="40" viewBox="0 0 20 20"><rect x="0" y="0" width="20" height="20" rx="0.4" fill="#06a7f0"/><circle cx="10.1" cy="10" r="8.5" stroke="#fff" stroke-width="0.95" fill="none"/><path d="M8.2 6.4 H10.6 Q14.4 6.4 14.4 10.05 Q14.4 13.7 10.6 13.7 H8.2 Q9.1 10.05 8.2 6.4Z" fill="#fff"/><circle cx="11" cy="10.05" r="0.95" fill="#06a7f0"/><rect x="14" y="9.35" width="4.6" height="1.4" fill="#fff"/><path d="M6 6.2 H7 Q7.6 10.05 7 13.9 H6Z" fill="#fff"/><rect x="1.4" y="7.9" width="4.8" height="1.1" fill="#fff"/><rect x="1.4" y="11.3" width="4.8" height="1.1" fill="#fff"/><g transform="translate(0 12.6) scale(0.74)"><rect x="0" y="0" width="10" height="10" fill="#fdfdfd"/><rect x="0" y="9.6" width="10" height="0.4" fill="#c9cdd6"/><path d="M2.2 8.2 L7.2 3.2" stroke="#0a6fd6" stroke-width="1.5" fill="none"/><path d="M4 2.3 H8.1 V6.4Z" fill="#0a6fd6"/></g></svg>
<div style="position:absolute;left:536px;top:365px;width:328px;height:28px;background:#ffffff;border:1px solid #e5e5e5;border-bottom:none;box-sizing:border-box"></div>
<div style="position:absolute;left:536px;top:391px;width:328px;height:2px;background:#005fb8"></div>
<div class="t" style="left:538.38px;top:369.77px;font-size:13.5px;color:#000000;font-weight:400;letter-spacing:-0.014px;">Open Kiosk</div>
<div style="position:absolute;left:438px;top:407px;width:423px;height:1px;background:#a0a0a0"></div>
<div class="t" style="left:438.15px;top:424.17px;font-size:13.5px;color:#000000;font-weight:400;letter-spacing:-0.008px;">Type of file:</div>
<div class="t" style="left:535.58px;top:424.17px;font-size:13.5px;color:#000000;font-weight:400;letter-spacing:-0.271px;">Shortcut (.lnk)</div>
<div class="t" style="left:437.27px;top:456.57px;font-size:13.5px;color:#000000;font-weight:400;letter-spacing:0.130px;">Description:</div>
<div class="t" style="left:535.33px;top:456.57px;font-size:13.5px;color:#000000;font-weight:400;letter-spacing:-0.011px;">launch-kiosk</div>
<div style="position:absolute;left:438px;top:487px;width:423px;height:1px;background:#a0a0a0"></div>
<div class="t" style="left:437.27px;top:504.27px;font-size:13.5px;color:#000000;font-weight:400;letter-spacing:0.066px;">Location:</div>
<div class="t" style="left:535.58px;top:504.27px;font-size:13.5px;color:#000000;font-weight:400;letter-spacing:0.026px;">C:\Users\mukes\Downloads\Open Kiosk</div>
<div class="t" style="left:437.77px;top:536.17px;font-size:13.5px;color:#000000;font-weight:400;letter-spacing:-0.006px;">Size:</div>
<div class="t" style="left:535.58px;top:536.17px;font-size:13.5px;color:#000000;font-weight:400;letter-spacing:-0.391px;">2.03 KB (2,079 bytes)</div>
<div class="t" style="left:437.77px;top:568.07px;font-size:13.5px;color:#000000;font-weight:400;letter-spacing:-0.027px;">Size on disk:</div>
<div class="t" style="left:535.95px;top:568.07px;font-size:13.5px;color:#000000;font-weight:400;letter-spacing:-0.410px;">4.00 KB (4,096 bytes)</div>
<div style="position:absolute;left:438px;top:599px;width:423px;height:1px;background:#a0a0a0"></div>
<div class="t" style="left:437.77px;top:616.77px;font-size:13.5px;color:#000000;font-weight:400;letter-spacing:0.118px;">Created:</div>
<div class="t" style="left:536.08px;top:616.77px;font-size:13.5px;color:#000000;font-weight:400;letter-spacing:-0.262px;">Wednesday, June 25, 2025, 7:58:23 PM</div>
<div class="t" style="left:437.27px;top:648.67px;font-size:13.5px;color:#000000;font-weight:400;letter-spacing:0.253px;">Modified:</div>
<div class="t" style="left:536.08px;top:648.67px;font-size:13.5px;color:#000000;font-weight:400;letter-spacing:-0.234px;">Wednesday, June 25, 2025, 7:59:11 PM</div>
<div class="t" style="left:438.40px;top:680.57px;font-size:13.5px;color:#000000;font-weight:400;letter-spacing:0.263px;">Accessed:</div>
<div class="t" style="left:536.75px;top:680.57px;font-size:13.5px;color:#000000;font-weight:400;letter-spacing:-0.244px;">Today, June 25, 2025, 7:59:11 PM</div>
<div style="position:absolute;left:438px;top:711px;width:423px;height:1px;background:#a0a0a0"></div>
<div class="t" style="left:438.40px;top:728.27px;font-size:13.5px;color:#000000;font-weight:400;letter-spacing:-0.210px;">Attributes:</div>
<div style="position:absolute;left:536px;top:729px;width:16px;height:16px;background:#f2f2f2;border:1px solid #707070;border-radius:3px;box-sizing:border-box"></div>
<div class="t" style="left:554.67px;top:731.27px;font-size:13.5px;color:#000000;font-weight:400;letter-spacing:0.116px;">Read-only</div>
<div style="position:absolute;left:642px;top:729px;width:16px;height:16px;background:#f2f2f2;border:1px solid #707070;border-radius:3px;box-sizing:border-box"></div>
<div class="t" style="left:660.67px;top:731.27px;font-size:13.5px;color:#000000;font-weight:400;letter-spacing:0.410px;">Hidden</div>
<div style="position:absolute;left:765px;top:724px;width:98px;height:26px;background:#fdfdfd;border:1px solid #d0d0d0;border-bottom-color:#bcbcbc;border-radius:4px;box-sizing:border-box"></div>
<div class="t" style="left:777.90px;top:730.37px;font-size:13.5px;color:#000000;font-weight:400;letter-spacing:0.030px;">Advanced...</div>
<div style="position:absolute;left:625px;top:860px;width:98px;height:26px;background:#fdfdfd;border:1px solid #0067c0;border-radius:4px;box-sizing:border-box;box-shadow:inset 0 0 0 1px rgba(0,103,192,0.25)"></div>
<div class="t" style="left:664.67px;top:867.07px;font-size:13.5px;color:#000000;font-weight:400;letter-spacing:-1.050px;">OK</div>
<div style="position:absolute;left:733px;top:860px;width:98px;height:26px;background:#fdfdfd;border:1px solid #d0d0d0;border-bottom-color:#bcbcbc;border-radius:4px;box-sizing:border-box"></div>
<div class="t" style="left:760.77px;top:867.07px;font-size:13.5px;color:#000000;font-weight:400;letter-spacing:0.140px;">Cancel</div>
<div style="position:absolute;left:841px;top:860px;width:98px;height:26px;background:#f7f7f7;border:1px solid #e5e5e5;border-radius:4px;box-sizing:border-box"></div>
<div class="t" style="left:872.00px;top:867.07px;font-size:13.5px;color:#8c8c8c;font-weight:400;letter-spacing:0.188px;">Apply</div>
</body></html>
